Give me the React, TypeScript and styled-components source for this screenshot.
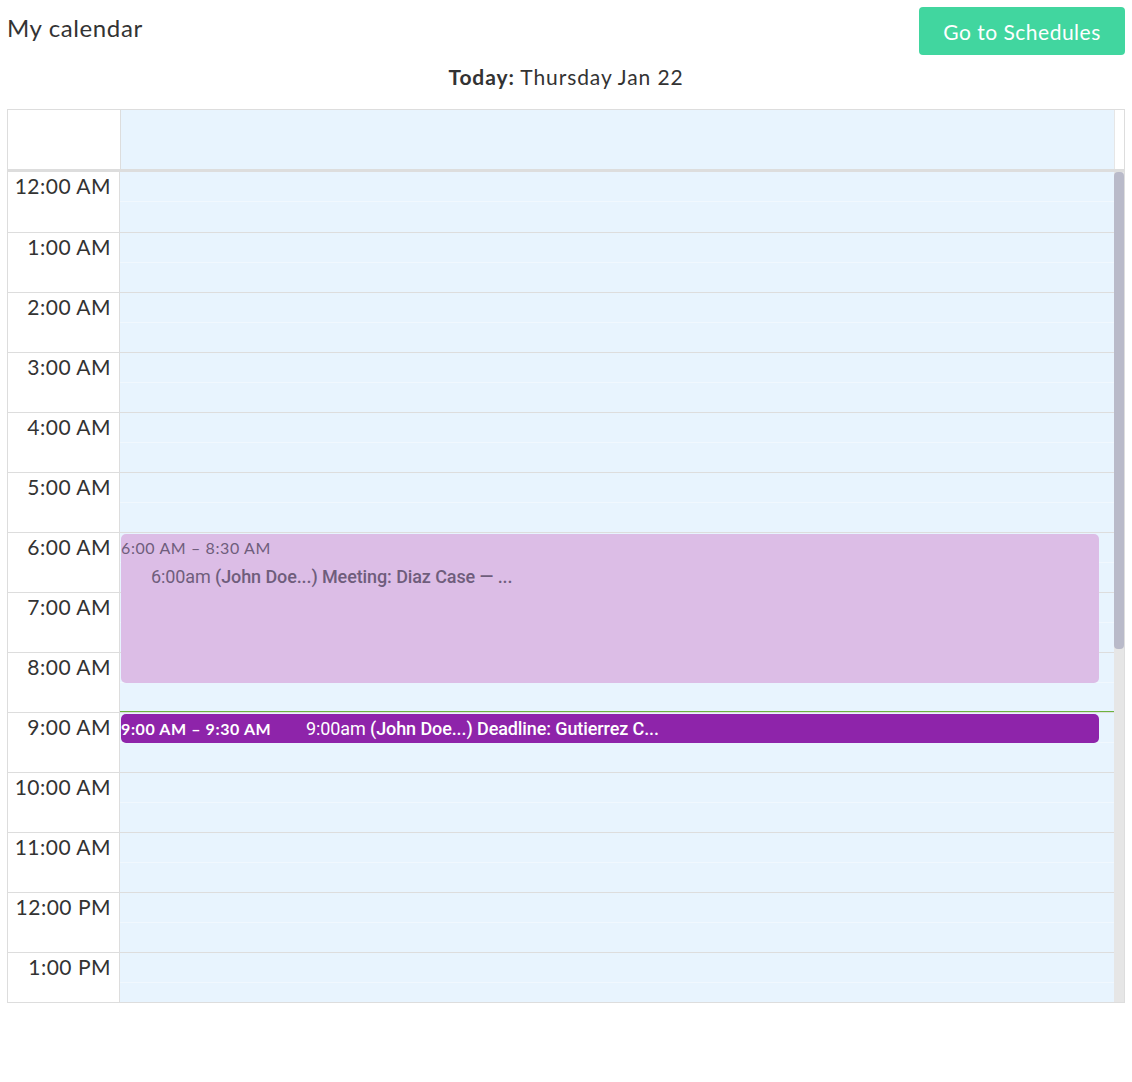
import React from "react";
import styled, { createGlobalStyle } from "styled-components";

const GlobalStyle = createGlobalStyle`
  body {
    margin: 0;
    background: #fff;
    font-family: "Lato", "Open Sans", sans-serif;
    color: #333;
  }
`;

const ROW = 60;

const Page = styled.div`
  padding: 7px 7px 0 7px;
`;

const TopBar = styled.div`
  display: flex;
  justify-content: space-between;
  align-items: flex-start;
`;

const Title = styled.h1`
  margin: 7px 0 0 0;
  font-size: 24px;
  font-weight: 400;
  letter-spacing: 0.6px;
  color: #333;
  line-height: 1.2;
`;

const ScheduleButton = styled.button`
  width: 206px;
  height: 48px;
  border: none;
  border-radius: 4px;
  background: #41d69f;
  color: #fff;
  font-family: "Lato", sans-serif;
  font-size: 21px;
  letter-spacing: 0.5px;
  cursor: pointer;
`;

const Today = styled.div`
  text-align: center;
  font-size: 21px;
  letter-spacing: 0.9px;
  margin: 10px 0 21px 0;
  line-height: 1.1;

  b {
    font-weight: 700;
  }
`;

const Calendar = styled.div`
  border: 1px solid #ddd;
  width: 1116px;
`;

const HeaderRow = styled.div`
  display: grid;
  grid-template-columns: 112px 1fr 9px;
  height: 59px;
  border-bottom: 3px solid #ddd;
`;

const HeaderGutter = styled.div`
  background: #fff;
`;

const HeaderDay = styled.div`
  background: #e8f4fe;
  border-left: 1px solid #ddd;
  border-right: 1px solid #e6e6e6;
`;

const Body = styled.div`
  display: flex;
  height: 830px;
`;

const ScrollArea = styled.div`
  flex: 1;
  overflow: hidden;
`;

const ScrollTrack = styled.div`
  width: 10px;
  background: #e6e6e6;
  display: flex;
  flex-direction: column;
`;

const ScrollThumb = styled.div`
  height: 477px;
  background: #b9bac9;
  border-radius: 4px;
`;

const Grid = styled.div`
  display: grid;
  grid-template-columns: 112px 1fr;
`;

const Gutter = styled.div`
  border-right: 1px solid #ddd;
`;

const TimeSlot = styled.div<{ $first?: boolean }>`
  height: ${ROW}px;
  box-sizing: border-box;
  border-top: ${(p) => (p.$first ? "none" : "1px solid #ddd")};
  text-align: right;
  padding: 1px 8px 0 0;
  font-size: 21px;
  letter-spacing: 0.5px;
  color: #333;
  line-height: 1.2;
`;

const DayColumn = styled.div`
  position: relative;
  background: #e8f4fe;
`;

const HourCell = styled.div<{ $first?: boolean }>`
  height: ${ROW}px;
  box-sizing: border-box;
  border-top: ${(p) => (p.$first ? "none" : "1px solid #ddd")};
  display: flex;
  flex-direction: column;
`;

const HalfLine = styled.div`
  height: 30px;
  border-bottom: 1px solid #f1f8fe;
  box-sizing: border-box;
`;

const NowLine = styled.div`
  position: absolute;
  left: 0;
  right: 0;
  height: 1px;
  background: #6cb33f;
`;

const Event = styled.div<{ $dark?: boolean }>`
  position: absolute;
  left: 1px;
  right: 15px;
  box-sizing: border-box;
  border-radius: 5px;
  overflow: hidden;
  background: ${(p) => (p.$dark ? "#8e24aa" : "#dcbde6")};
  color: ${(p) => (p.$dark ? "#fff" : "#6f5d7c")};
  display: flex;
  flex-direction: ${(p) => (p.$dark ? "row" : "column")};
  align-items: ${(p) => (p.$dark ? "center" : "stretch")};
`;

const EventTime = styled.div<{ $dark?: boolean }>`
  font-family: "Lato", sans-serif;
  font-size: 16px;
  letter-spacing: 0.6px;
  font-weight: ${(p) => (p.$dark ? 700 : 400)};
  white-space: nowrap;
  line-height: 1;
  padding-top: ${(p) => (p.$dark ? "0" : "6px")};
  width: ${(p) => (p.$dark ? "185px" : "auto")};
`;

const EventTitle = styled.div<{ $dark?: boolean }>`
  font-family: "Roboto", sans-serif;
  font-size: 18px;
  white-space: nowrap;
  letter-spacing: -0.1px;
  padding-left: ${(p) => (p.$dark ? "0" : "30px")};
  padding-top: ${(p) => (p.$dark ? "0" : "12px")};
  line-height: 1;

  b {
    font-weight: 500;
  }
`;

const hours = Array.from({ length: 24 }, (_, i) => {
  const h = i % 12 === 0 ? 12 : i % 12;
  return `${h}:00 ${i < 12 ? "AM" : "PM"}`;
});

export default function App() {
  return (
    <Page>
      <GlobalStyle />
      <TopBar>
        <Title>My calendar</Title>
        <ScheduleButton>Go to Schedules</ScheduleButton>
      </TopBar>
      <Today>
        <b>Today:</b> Thursday Jan 22
      </Today>
      <Calendar>
        <HeaderRow>
          <HeaderGutter />
          <HeaderDay />
          <HeaderGutter />
        </HeaderRow>
        <Body>
          <ScrollArea>
            <Grid>
              <Gutter>
                {hours.map((label, i) => (
                  <TimeSlot key={label} $first={i === 0}>
                    {label}
                  </TimeSlot>
                ))}
              </Gutter>
              <DayColumn>
                {hours.map((label, i) => (
                  <HourCell key={label} $first={i === 0}>
                    <HalfLine />
                  </HourCell>
                ))}
                <Event style={{ top: 362, height: 149 }}>
                  <EventTime>6:00 AM – 8:30 AM</EventTime>
                  <EventTitle>
                    6:00am <b>(John Doe...) Meeting: Diaz Case — ...</b>
                  </EventTitle>
                </Event>
                <NowLine style={{ top: 539 }} />
                <Event $dark style={{ top: 542, height: 29 }}>
                  <EventTime $dark>9:00 AM – 9:30 AM</EventTime>
                  <EventTitle $dark>
                    9:00am <b>(John Doe...) Deadline: Gutierrez C...</b>
                  </EventTitle>
                </Event>
              </DayColumn>
            </Grid>
          </ScrollArea>
          <ScrollTrack>
            <ScrollThumb />
          </ScrollTrack>
        </Body>
      </Calendar>
    </Page>
  );
}
